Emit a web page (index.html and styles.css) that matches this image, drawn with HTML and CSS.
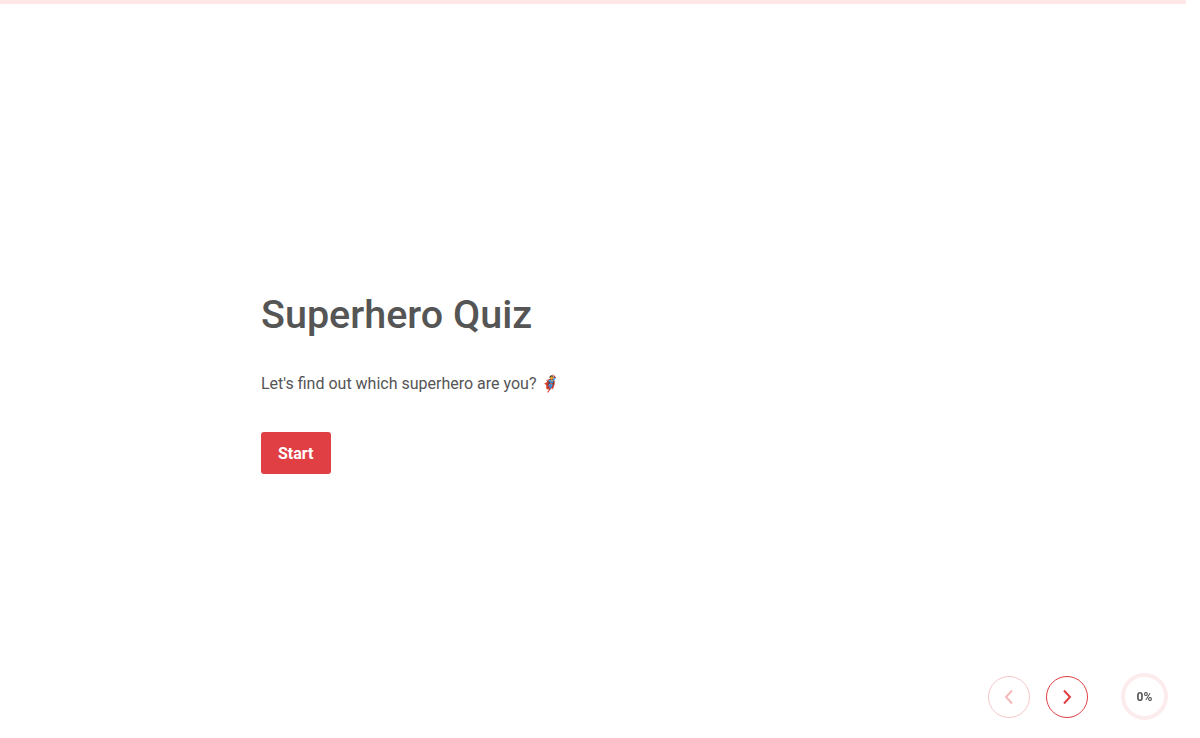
FILE: index.html
```html
<!DOCTYPE html>
<html>
<head>
	<meta charset="utf-8">
	<title>Superhero Quiz</title>
	<link rel="stylesheet" href="styles.css">
</head>
<body>
	<div class="progress-bar"><div class="progress-fill"></div></div>

	<main class="quiz">
		<section class="welcome">
			<h1 class="title">Superhero Quiz</h1>
			<p class="intro">Let's find out which superhero are you? 🦸</p>
			<button type="button" class="btn-start">Start</button>
		</section>
	</main>

	<nav class="quiz-nav">
		<button type="button" class="nav-btn nav-prev" disabled>
			<svg width="10" height="16" viewBox="0 0 10 16"><path d="M8 1.5 L2 8 L8 14.5" fill="none" stroke="currentColor" stroke-width="2"/></svg>
		</button>
		<button type="button" class="nav-btn nav-next">
			<svg width="10" height="16" viewBox="0 0 10 16"><path d="M2 1.5 L8 8 L2 14.5" fill="none" stroke="currentColor" stroke-width="2"/></svg>
		</button>
		<div class="progress-ring">0%</div>
	</nav>
</body>
</html>
```

FILE: styles.css
```css
body{
	margin: 0 14px 0 0;
	font-family: Roboto, "Liberation Sans", sans-serif;
	color: #555;
	background: #fff;
}
.progress-bar{
	position: fixed;
	top: 0;
	left: 0;
	right: 14px;
	height: 4px;
	background: #ffe6e7;
}
.progress-fill{
	width: 0;
	height: 100%;
	background: #e04044;
}
.quiz{
	min-height: 738px;
	display: flex;
	justify-content: center;
}
.welcome{
	width: 664px;
	padding-top: 287px;
}
.title{
	margin: 0;
	font-size: 39.5px;
	font-weight: 500;
	line-height: 56px;
}
.intro{
	margin: 29px 0 0;
	font-size: 16px;
	line-height: 24px;
}
.btn-start{
	margin-top: 36px;
	height: 42px;
	padding: 0 17px;
	border: none;
	border-radius: 3px;
	background: #e04044;
	color: #fff;
	font-family: inherit;
	font-size: 16px;
	font-weight: 700;
	cursor: pointer;
}
.quiz-nav{
	position: fixed;
	right: 32px;
	bottom: 18px;
	display: flex;
	align-items: center;
}
.nav-btn{
	width: 42px;
	height: 42px;
	margin-right: 16px;
	padding: 0;
	display: flex;
	align-items: center;
	justify-content: center;
	border-radius: 50%;
	background: #fff;
	border: 1px solid #e04044;
	color: #e04044;
	cursor: pointer;
}
.nav-prev{
	border-color: #f7c6c8;
	color: #f5b9bb;
	cursor: default;
}
.nav-next{
	margin-right: 33px;
}
.progress-ring{
	width: 39px;
	height: 39px;
	border: 4px solid #fdeced;
	border-radius: 50%;
	display: flex;
	align-items: center;
	justify-content: center;
	font-size: 12px;
	font-weight: 700;
	color: #555;
}
```
